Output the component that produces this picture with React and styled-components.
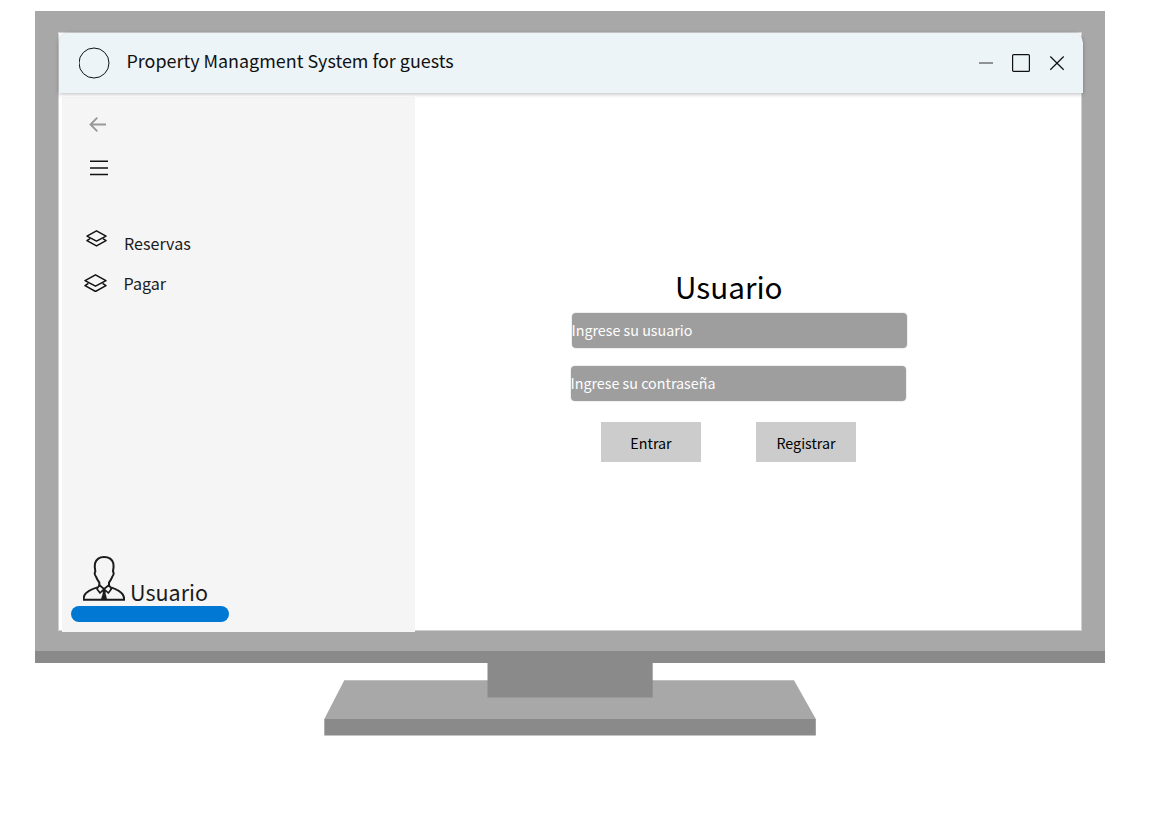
import React from "react";
import styled, { createGlobalStyle } from "styled-components";

const GlobalStyle = createGlobalStyle`
  * { box-sizing: border-box; }
  body {
    margin: 0;
    background: #fff;
    color: #1b1b1b;
    font-family: "Noto Sans CJK SC", "Noto Sans", sans-serif;
  }
  svg { display: block; flex: none; }
`;

const Page = styled.main`
  width: 1170px;
  height: 836px;
  padding: 11px 65px 0 35px;
  overflow: hidden;
`;

const Monitor = styled.section`
  width: 1070px;
  height: 652px;
  padding: 21px 23px 0;
  background: linear-gradient(#a8a8a8 639.5px, #8a8a8a 640px);
`;

const Screen = styled.div`
  width: 1024px;
  height: 599px;
  border: 1px solid #d0d0d0;
  background: #fff;
`;

const TitleBar = styled.header`
  position: relative;
  display: flex;
  align-items: center;
  width: 1024px;
  height: 60px;
  padding: 0 17.5px 0 19.5px;
  border-radius: 10px 10px 0 0;
  background: #ecf4f8;
  box-shadow: 0 1px 4px rgba(0, 0, 0, 0.28);
`;

const Title = styled.h1`
  flex: 1;
  margin: 0 0 6px 17px;
  font-size: 17.92px;
  font-weight: 400;
  line-height: 28px;
  color: #111;
`;

const WindowControls = styled.div`
  display: flex;
  align-items: center;
  gap: 18px;
`;

const Workspace = styled.div`
  display: flex;
  height: 539px;
  padding: 4px 0 0 3px;
`;

const Sidebar = styled.aside`
  display: flex;
  flex-direction: column;
  align-items: flex-start;
  width: 353px;
  height: 535px;
  padding: 20px 9px 10px;
  background: #f5f5f5;
`;

const IconSlot = styled.div`
  margin: ${(p) => p.$margin};
`;

const NavItem = styled.div`
  display: flex;
  align-items: center;
  height: 40px;
  padding-left: ${(p) => p.$indent}px;
`;

const NavLabel = styled.span`
  margin-left: ${(p) => p.$gap}px;
  font-size: 16.1px;
  line-height: 26px;
`;

const Account = styled.div`
  display: flex;
  align-items: flex-end;
  height: 51px;
  margin-top: auto;
  padding-left: 12px;
`;

const AccountName = styled.span`
  margin: 0 0 -4px 5px;
  font-size: 21.5px;
  line-height: 36px;
`;

const AccountBar = styled.div`
  width: 158px;
  height: 16px;
  border-radius: 8px;
  background: #0078d4;
`;

const LoginForm = styled.form`
  width: 340px;
  margin: 166px 0 0 155px;
`;

const Heading = styled.h2`
  margin: 0 0 3px 105px;
  font-size: 29.7px;
  font-weight: 400;
  line-height: 47px;
  color: #000;
`;

const Field = styled.div`
  width: 335px;
  height: 35px;
  margin: 0 0 18px ${(p) => p.$shift}px;
  border-radius: 4px;
  box-shadow: 0 0 0 1px #f0f0f0;
  background: #9e9e9e;
  color: #fff;
  font-size: 14.3px;
  line-height: 34px;
  text-indent: -0.5px;
`;

const Actions = styled.div`
  display: flex;
  gap: 55px;
  margin: 21px 0 0 31px;
`;

const Button = styled.button`
  width: 100px;
  height: 40px;
  padding: 2px 0 0;
  border: 0;
  background: #ccc;
  color: #000;
  font: 14.3px/22px "Noto Sans CJK SC", "Noto Sans", sans-serif;
`;

const Stand = styled.div`
  margin-left: 289px;
`;

const LayersIcon = ({ width }) => (
  <svg width={width} height={width * 0.8} viewBox="0 0 22 17.6" fill="none" stroke="#111" strokeWidth="1.5" strokeLinejoin="round">
    <path d="M11 .8 21 6.3 11 11.6 1 6.3Z" />
    <path d="M4.2 9 1 11.1l10 5.6 10-5.6L17.8 9" />
  </svg>
);

const PersonIcon = () => (
  <svg width="42" height="46" viewBox="15 15 126 138" fill="none" stroke="#1b1b1b" strokeWidth="6" strokeLinejoin="round">
    <path d="M64 106V98Q57 88 54 80Q50 76 50 69L52 64Q49 50 51 40Q57 21 78 21Q101 21 106 40Q108 50 105 64L107 69Q107 76 103 80Q99 90 93 98V106" />
    <path d="M58 112Q28 122 21 133Q17 139 17 149H139Q138 139 134 133Q127 122 99 112" />
    <path d="M64 105 57 117 66 129 78 117 91 129 100 117 93 105M64 105 78 117 93 105" strokeWidth="5" />
    <path d="m73 122 5-4 6 4-2 7 5 20H69l6-20Z" fill="#1b1b1b" strokeWidth="1" />
  </svg>
);

export default function App() {
  return (
    <>
      <GlobalStyle />
      <Page>
        <Monitor>
          <Screen>
            <TitleBar>
              <svg width="31" height="32" viewBox="0 0 31 32" fill="none" stroke="#111">
                <circle cx="15" cy="16" r="15" />
              </svg>
              <Title>Property Managment System for guests</Title>
              <WindowControls>
                <svg width="15" height="18" viewBox="0 0 15 18" stroke="#858789" strokeWidth="1.8">
                  <path d="M0 9h14" />
                </svg>
                <svg width="18" height="18" viewBox="0 0 18 18" fill="none" stroke="#111" strokeWidth="1.2">
                  <rect x=".6" y=".6" width="16.8" height="16.8" rx="1" />
                </svg>
                <svg width="18" height="18" viewBox="0 0 18 18" stroke="#111" strokeWidth="1.2">
                  <path d="m2.3 2.5 13.4 13.2m0-13.2L2.3 15.7" />
                </svg>
              </WindowControls>
            </TitleBar>
            <Workspace>
              <Sidebar>
                <IconSlot $margin="0 0 0 18px">
                  <svg width="18" height="16" viewBox="0 0 18 16" fill="none" stroke="#999" strokeWidth="1.9">
                    <path d="M17 7.5H1.6M8.3.7 1.5 7.5l6.8 6.8" />
                  </svg>
                </IconSlot>
                <IconSlot $margin="27px 0 47px 19px">
                  <svg width="18" height="16" viewBox="0 0 18 16" stroke="#111" strokeWidth="1.4">
                    <path d="M0 1.3h18M0 8h18M0 14.5h18" />
                  </svg>
                </IconSlot>
                <NavItem $indent={15}>
                  <IconSlot $margin="-9px 0 0 0"><LayersIcon width={21} /></IconSlot>
                  <NavLabel $gap={17}>Reservas</NavLabel>
                </NavItem>
                <NavItem $indent={13}>
                  <LayersIcon width={23} />
                  <NavLabel $gap={16.5}>Pagar</NavLabel>
                </NavItem>
                <Account>
                  <IconSlot $margin="0 0 5px"><PersonIcon /></IconSlot>
                  <AccountName>Usuario</AccountName>
                </Account>
                <AccountBar />
              </Sidebar>
              <LoginForm onSubmit={(e) => e.preventDefault()}>
                <Heading>Usuario</Heading>
                <Field $shift={2}>Ingrese su usuario</Field>
                <Field $shift={1}>Ingrese su contraseña</Field>
                <Actions>
                  <Button type="button">Entrar</Button>
                  <Button type="button">Registrar</Button>
                </Actions>
              </LoginForm>
            </Workspace>
          </Screen>
        </Monitor>
        <Stand>
          <svg width="492" height="73" viewBox="0 0 492 73">
            <path d="M20.3 17.2H470L491.8 56H.3Z" fill="#a8a8a8" />
            <path d="M.3 56h491.5v16.4H.3Z" fill="#8a8a8a" />
            <path d="M163.5 0h165.2v34.4H163.5Z" fill="#8a8a8a" />
          </svg>
        </Stand>
      </Page>
    </>
  );
}
